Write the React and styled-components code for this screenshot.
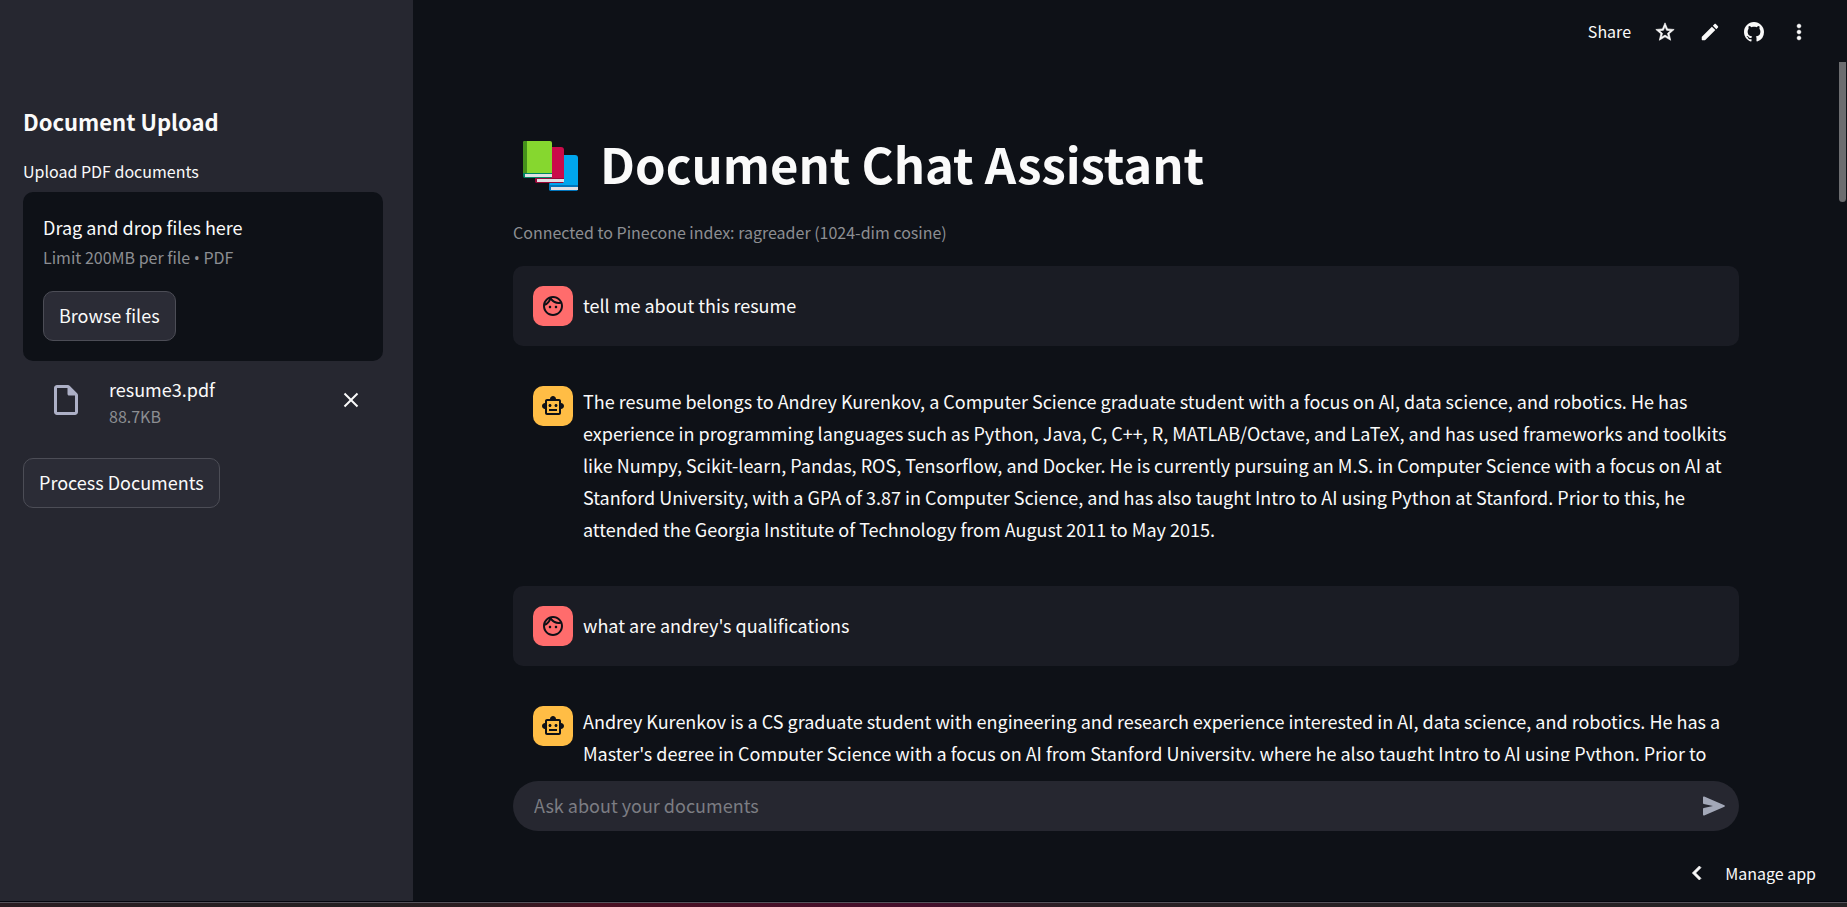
import React from "react";
import styled, { createGlobalStyle } from "styled-components";

const Global = createGlobalStyle`
  * { box-sizing: border-box; }
  body { margin: 0; background: #0e1117; }
  body, button, input { font-family: "Noto Sans CJK SC", "Noto Sans", sans-serif; color: #fafafa; }
`;

const Screen = styled.div`
  display: flex;
  flex-direction: column;
  height: 100vh;
  overflow: hidden;
`;

const Desktop = styled.div`
  flex: none;
  height: 6px;
  border-top: 1px solid #05060e;
  box-shadow: inset 0 1px #55525a;
  background: linear-gradient(90deg, #2a1d22, #242022 20%, #2e1c20 27%, #4a1022 32%, #450f2c 50%, #2a2024 58%, #242224);
`;

const Shell = styled.div`
  flex: 1;
  display: flex;
  min-height: 0;
`;

const Sidebar = styled.aside`
  flex: none;
  width: 413px;
  padding: 104px 30px 0 23px;
  background: #262730;
`;

const SidebarTitle = styled.h2`
  margin: 0 0 21px;
  font-size: 22px;
  line-height: 34px;
  font-weight: 700;
`;

const FieldLabel = styled.label`
  display: block;
  font-size: 16px;
  line-height: 24px;
  margin-bottom: 9px;
`;

const DropZone = styled.section`
  height: 169px;
  padding: 19px 20px 20px;
  border-radius: 10px;
  background: #0e1117;
`;

const FileText = styled.div`
  font-size: 18px;
  line-height: 32px;
`;

const Caption = styled.div`
  font-size: 16px;
  line-height: 28px;
  color: #8c8e92;
`;

const Bullet = styled.span`
  font-family: "Open Sans", "Noto Sans", sans-serif;
  line-height: 16px;
`;

const DropAction = styled.div`
  margin-top: 20px;
`;

const Button = styled.button`
  height: 50px;
  padding: 0 15px 2px;
  font-size: 18px;
  line-height: 32px;
  border: 1px solid #4c4d56;
  border-radius: 10px;
  background: #2b2c36;
`;

const HiddenFile = styled.input`
  display: none;
`;

const FileRow = styled.div`
  display: flex;
  align-items: center;
  height: 97px;
  padding: 0 22px 20px 25px;
`;

const FileIcon = styled.span`
  display: flex;
  color: #adb0c6;
`;

const FileName = styled.div`
  flex: 1;
  margin-left: 25px;
`;

const FileSize = styled(Caption)`
  line-height: 22px;
`;

const IconButton = styled.button`
  display: flex;
  align-items: center;
  justify-content: center;
  padding: 0;
  border: 0;
  background: none;
`;

const SendButton = styled(IconButton)`
  color: #a3a8b8;
`;

const Main = styled.main`
  flex: 1;
  display: flex;
  flex-direction: column;
  min-width: 0;
`;

const Toolbar = styled.header`
  flex: none;
  display: flex;
  justify-content: flex-end;
  align-items: center;
  gap: 23px;
  height: 62px;
  padding: 2px 36px 0 0;
`;

const TextButton = styled.button`
  display: flex;
  align-items: center;
  gap: 14px;
  padding: 0 0 2px;
  border: 0;
  background: none;
  font-size: 16px;
  line-height: 24px;
`;

const Body = styled.div`
  flex: 1;
  display: flex;
  justify-content: space-between;
  min-height: 0;
`;

const Conversation = styled.div`
  flex: 1;
  min-width: 0;
  overflow: hidden;
  padding: 66px 100px 0;
`;

const ScrollTrack = styled.div`
  flex: none;
  width: 8px;
`;

const ScrollThumb = styled.div`
  width: 7px;
  height: 140px;
  border-radius: 0 0 4px 4px;
  background: #6c6d70;
`;

const PageTitle = styled.h1`
  display: flex;
  align-items: flex-start;
  gap: 20px;
  margin: 0 0 21px;
  padding-left: 9px;
  font-size: 49px;
  line-height: 70px;
  font-weight: 700;
`;

const BooksIcon = styled.svg`
  flex: none;
  margin-top: 12px;
`;

const Status = styled.p`
  margin: 0 0 21px;
  font-size: 16px;
  line-height: 26px;
  color: #8c8e92;
`;

const Message = styled.article`
  display: flex;
  gap: 10px;
  margin-bottom: 20px;
  padding: 20px 10px 20px 20px;
  border-radius: 10px;
  background: ${(p) => (p.$user ? "#1a1c24" : "transparent")};
`;

const Avatar = styled.div`
  flex: none;
  display: flex;
  align-items: center;
  justify-content: center;
  width: 40px;
  height: 40px;
  border-radius: 10px;
  background: ${(p) => (p.$user ? "#ff6c6c" : "#ffbd45")};
  color: #0e1117;
`;

const MessageText = styled.p`
  margin: ${(p) => (p.$user ? "3px 0 5px" : "-1px 0 1px")};
  font-size: 18px;
  line-height: 32px;
`;

const Composer = styled.form`
  flex: none;
  display: flex;
  align-items: center;
  height: 50px;
  margin: 20px 108px 0 100px;
  padding: 0 13px 0 21px;
  border-radius: 25px;
  background: #262730;
`;

const ComposerInput = styled.input`
  flex: 1;
  min-width: 0;
  padding: 0 0 2px;
  border: 0;
  outline: 0;
  background: none;
  font-size: 18px;
  line-height: 32px;
  &::placeholder { color: #7c7d83; opacity: 1; }
`;

const Footer = styled.footer`
  flex: none;
  display: flex;
  justify-content: flex-end;
  align-items: center;
  height: 70px;
  padding: 15px 31px 0 0;
`;

const Icon = ({ size = 24, d, box = "0 0 24 24", weight = 0 }) => (
  <svg width={size} height={size} viewBox={box} fill="currentColor" stroke="currentColor" strokeWidth={weight} aria-hidden="true">
    <path d={d} />
  </svg>
);

const paths = {
  star: "M22 9.24l-7.19-.62L12 2 9.19 8.63 2 9.24l5.46 4.73L5.82 21 12 17.27 18.18 21l-1.63-7.03L22 9.24zM12 15.4l-3.76 2.27 1-4.28-3.32-2.88 4.38-.38L12 6.1l1.71 4.04 4.38.38-3.32 2.88 1 4.28L12 15.4z",
  pencil: "M3 17.46v3.04c0 .28.22.5.5.5h3.04c.13 0 .26-.05.35-.15L17.81 9.94l-3.75-3.75L3.15 17.1c-.1.1-.15.22-.15.36zM20.71 7.04c.39-.39.39-1.02 0-1.41l-2.34-2.34c-.39-.39-1.02-.39-1.41 0l-1.83 1.83 3.75 3.75 1.83-1.83z",
  github: "M8 0C3.58 0 0 3.58 0 8c0 3.54 2.29 6.53 5.47 7.59.4.07.55-.17.55-.38 0-.19-.01-.82-.01-1.49-2.01.37-2.53-.49-2.69-.94-.09-.23-.48-.94-.82-1.13-.28-.15-.68-.52-.01-.53.63-.01 1.08.58 1.23.82.72 1.21 1.87.87 2.33.66.07-.52.28-.87.51-1.07-1.78-.2-3.64-.89-3.64-3.95 0-.87.31-1.59.82-2.15-.08-.2-.36-1.02.08-2.12 0 0 .67-.21 2.2.82.64-.18 1.32-.27 2-.27s1.36.09 2 .27c1.53-1.04 2.2-.82 2.2-.82.44 1.1.16 1.92.08 2.12.51.56.82 1.27.82 2.15 0 3.07-1.87 3.75-3.65 3.95.29.25.54.73.54 1.48 0 1.07-.01 1.93-.01 2.2 0 .21.15.46.55.38A8.01 8.01 0 0 0 16 8c0-4.42-3.58-8-8-8z",
  more: "M12 8c1.1 0 2-.9 2-2s-.9-2-2-2-2 .9-2 2 .9 2 2 2zm0 2c-1.1 0-2 .9-2 2s.9 2 2 2 2-.9 2-2-.9-2-2-2zm0 6c-1.1 0-2 .9-2 2s.9 2 2 2 2-.9 2-2-.9-2-2-2z",
  file: "M14.59 2.59c-.38-.38-.89-.59-1.42-.59H6c-1.1 0-2 .9-2 2v16c0 1.1.89 2 1.99 2H18c1.1 0 2-.9 2-2V8.83c0-.53-.21-1.04-.59-1.41l-4.82-4.83zM18 20H6V4h7v4c0 .55.45 1 1 1h4v11z",
  close: "M4.2 2.8L10 8.6 15.8 2.8 17.2 4.2 11.4 10 17.2 15.8 15.8 17.2 10 11.4 4.2 17.2 2.8 15.8 8.6 10 2.8 4.2z",
  face: "M10.25 13c0 .69-.56 1.25-1.25 1.25S7.75 13.69 7.75 13s.56-1.25 1.25-1.25 1.25.56 1.25 1.25zM15 11.75c-.69 0-1.25.56-1.25 1.25s.56 1.25 1.25 1.25 1.25-.56 1.25-1.25-.56-1.25-1.25-1.25zm7 .25c0 5.52-4.48 10-10 10S2 17.52 2 12 6.48 2 12 2s10 4.48 10 10zM10.66 4.12C12.06 6.44 14.6 8 17.5 8c.46 0 .91-.05 1.34-.12C17.44 5.56 14.9 4 12 4c-.46 0-.91.05-1.34.12zM4.42 9.47c1.71-.97 3.03-2.55 3.66-4.44C6.37 6 5.05 7.58 4.42 9.47zM20 12c0-.78-.12-1.53-.33-2.24-.7.15-1.42.24-2.17.24-3.13 0-5.92-1.44-7.76-3.69C8.69 8.87 6.6 10.88 4 11.86c.01.04 0 .09 0 .14 0 4.41 3.59 8 8 8s8-3.59 8-8z",
  robot: "M20 9V7c0-1.1-.9-2-2-2h-3c0-1.66-1.34-3-3-3S9 3.34 9 5H6c-1.1 0-2 .9-2 2v2c-1.66 0-3 1.34-3 3s1.34 3 3 3v4c0 1.1.9 2 2 2h12c1.1 0 2-.9 2-2v-4c1.66 0 3-1.34 3-3s-1.34-3-3-3zm-2 10H6V7h12v12zm-9-6c-.83 0-1.5-.67-1.5-1.5S8.17 10 9 10s1.5.67 1.5 1.5S9.83 13 9 13zm7.5-1.5c0 .83-.67 1.5-1.5 1.5s-1.5-.67-1.5-1.5.67-1.5 1.5-1.5 1.5.67 1.5 1.5zM8 15h8v2H8v-2z",
  send: "M1 3.4V8.9Q1 9.7 1.8 9.9L11 12L1.8 14.1Q1 14.3 1 15.1V20.6Q1 21.8 2.2 21.4L22.4 12.8Q23.6 12 22.4 11.2L2.2 2.6Q1 2.2 1 3.4Z",
  chevron: "M15.41 7.41L14 6l-6 6 6 6 1.41-1.41L10.83 12z",
};

const Books = () => (
  <BooksIcon width="58" height="54" viewBox="0 0 58 54" aria-hidden="true">
    <path d="M29 15h24q3 0 3 3v30l-1 3H29q-2 0-2-3z" fill="#00a6ed" />
    <path d="M27 45h29v3l-1 3H29q-2 0-2-3z" fill="#0074ba" />
    <path d="M29 47h27v3H29z" fill="#e0e0e4" />
    <path d="M15 7h24q3 0 3 3v30l-1 3H15q-2 0-2-3z" fill="#ca0b4a" />
    <path d="M13 38h29v3l-1 2H15q-2 0-2-3z" fill="#990838" />
    <path d="M15 39h27v3H15z" fill="#e0e0e4" />
    <path d="M3 1h25q2 0 2 2v33H1V3q0-2 2-2z" fill="#86d72f" />
    <path d="M3 1h2v33H1V3q0-2 2-2z" fill="#44911b" />
    <path d="M5 1v32H3V1z" fill="#44911b" />
    <path d="M1 33h29v4l-1 1H3q-2 0-2-2z" fill="#008463" />
    <path d="M3 34h27v3H3z" fill="#e0e0e4" />
  </BooksIcon>
);

const messages = [
  { user: true, text: "tell me about this resume" },
  { user: false, text: "The resume belongs to Andrey Kurenkov, a Computer Science graduate student with a focus on AI, data science, and robotics. He has experience in programming languages such as Python, Java, C, C++, R, MATLAB/Octave, and LaTeX, and has used frameworks and toolkits like Numpy, Scikit-learn, Pandas, ROS, Tensorflow, and Docker. He is currently pursuing an M.S. in Computer Science with a focus on AI at Stanford University, with a GPA of 3.87 in Computer Science, and has also taught Intro to AI using Python at Stanford. Prior to this, he attended the Georgia Institute of Technology from August 2011 to May 2015." },
  { user: true, text: "what are andrey's qualifications" },
  { user: false, text: "Andrey Kurenkov is a CS graduate student with engineering and research experience interested in AI, data science, and robotics. He has a Master's degree in Computer Science with a focus on AI from Stanford University, where he also taught Intro to AI using Python. Prior to" },
];

export default function App() {
  return (
    <Screen>
      <Global />
      <Shell>
        <Sidebar>
          <SidebarTitle>Document Upload</SidebarTitle>
          <FieldLabel htmlFor="pdf">Upload PDF documents</FieldLabel>
          <DropZone>
            <HiddenFile id="pdf" type="file" accept=".pdf" />
            <FileText>Drag and drop files here</FileText>
            <Caption>Limit 200MB per file <Bullet>•</Bullet> PDF</Caption>
            <DropAction>
              <Button type="button">Browse files</Button>
            </DropAction>
          </DropZone>
          <FileRow>
            <FileIcon><Icon size={36} d={paths.file} /></FileIcon>
            <FileName>
              <FileText>resume3.pdf</FileText>
              <FileSize>88.7KB</FileSize>
            </FileName>
            <IconButton type="button" aria-label="Remove file"><Icon size={20} box="0 0 20 20" d={paths.close} /></IconButton>
          </FileRow>
          <Button type="button">Process Documents</Button>
        </Sidebar>
        <Main>
          <Toolbar>
            <TextButton type="button">Share</TextButton>
            <IconButton type="button" aria-label="Favorite"><Icon size={22} weight={0.7} d={paths.star} /></IconButton>
            <IconButton type="button" aria-label="Edit"><Icon size={22} d={paths.pencil} /></IconButton>
            <IconButton type="button" aria-label="View source"><Icon size={20} box="0 0 16 16" d={paths.github} /></IconButton>
            <IconButton type="button" aria-label="More"><Icon size={24} weight={0.4} d={paths.more} /></IconButton>
          </Toolbar>
          <Body>
            <Conversation>
              <PageTitle><Books />Document Chat Assistant</PageTitle>
              <Status>Connected to Pinecone index: ragreader (1024-dim cosine)</Status>
              {messages.map((m) => (
                <Message key={m.text} $user={m.user}>
                  <Avatar $user={m.user}>
                    <Icon size={24} d={m.user ? paths.face : paths.robot} />
                  </Avatar>
                  <MessageText $user={m.user}>{m.text}</MessageText>
                </Message>
              ))}
            </Conversation>
            <ScrollTrack><ScrollThumb /></ScrollTrack>
          </Body>
          <Composer>
            <ComposerInput aria-label="Ask about your documents" placeholder="Ask about your documents" />
            <SendButton type="button" aria-label="Send"><Icon size={24} d={paths.send} /></SendButton>
          </Composer>
          <Footer>
            <TextButton type="button"><Icon size={28} weight={0.6} d={paths.chevron} />Manage app</TextButton>
          </Footer>
        </Main>
      </Shell>
      <Desktop />
    </Screen>
  );
}
